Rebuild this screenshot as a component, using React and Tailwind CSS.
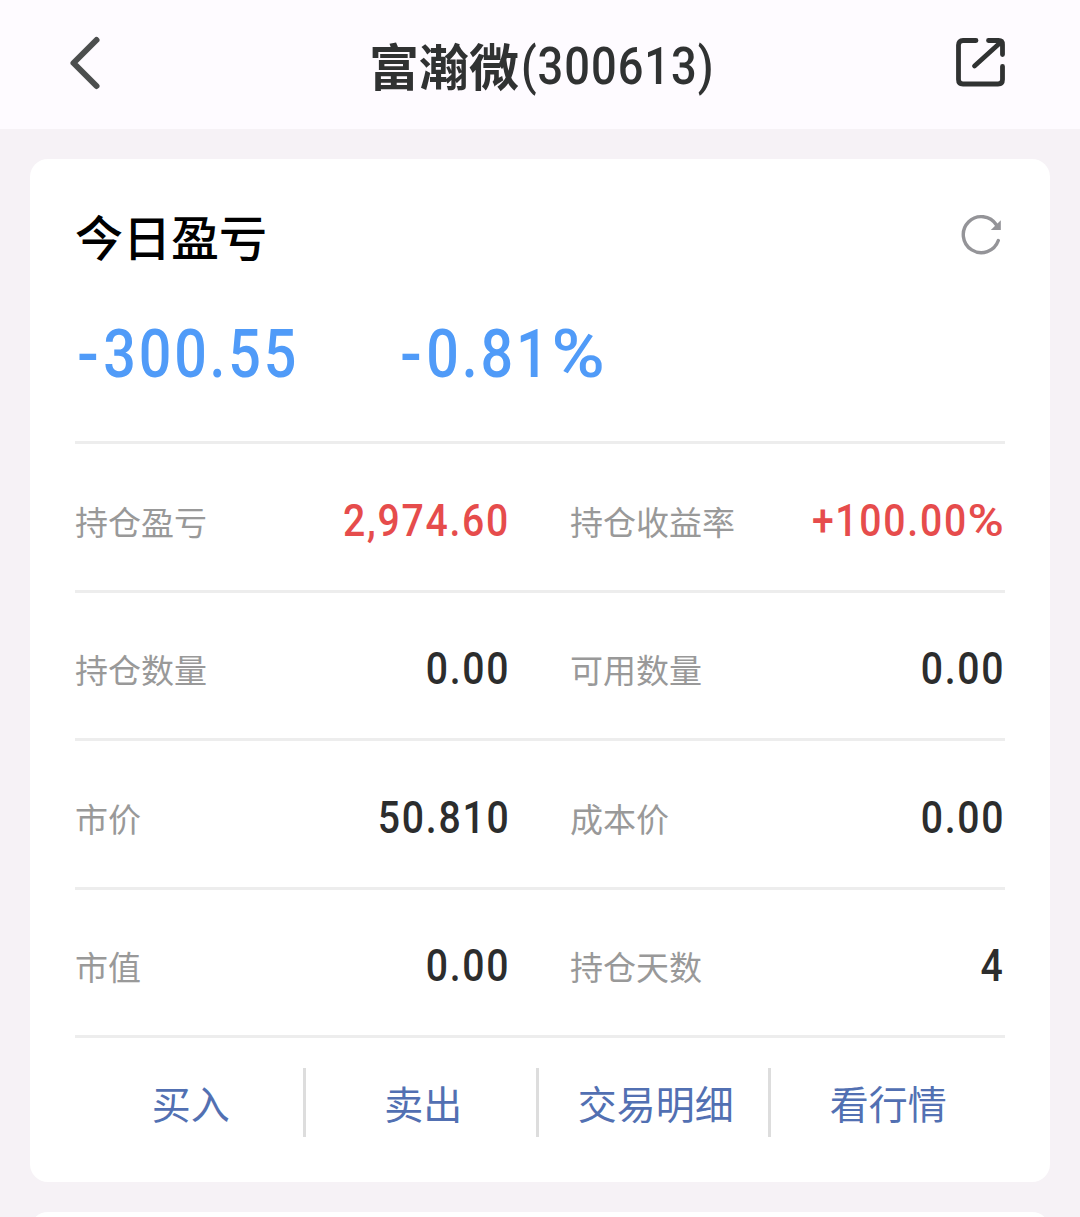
const rows = [
  [
    { label: "持仓盈亏", value: "2,974.60", up: true },
    { label: "持仓收益率", value: "+100.00%", up: true },
  ],
  [
    { label: "持仓数量", value: "0.00" },
    { label: "可用数量", value: "0.00" },
  ],
  [
    { label: "市价", value: "50.810" },
    { label: "成本价", value: "0.00" },
  ],
  [
    { label: "市值", value: "0.00" },
    { label: "持仓天数", value: "4" },
  ],
];

const actions = ["买入", "卖出", "交易明细", "看行情"];

// Condensed figures, with wider signs around them
function Figures({ value }) {
  const sign = value.startsWith("-");
  const percent = value.endsWith("%");
  return (
    <>
      {sign && (
        <span className="mr-[0.07em] inline-block origin-left scale-x-[1.12]">
          -
        </span>
      )}
      {value.replace(/^-|%$/g, "")}
      {percent && (
        <span className="mr-[0.17em] inline-block origin-left scale-x-[1.26]">
          %
        </span>
      )}
    </>
  );
}

function Header() {
  return (
    <header className="flex h-[129px] items-start justify-between bg-[#fefbff] text-[#303232]">
      <button type="button" aria-label="返回" className="ml-[60px] mt-[28px]">
        <svg className="h-[70px] w-[50px]" viewBox="0 0 50 70" fill="none">
          <path
            d="M36.5 12 L13.5 35 L36.5 58"
            stroke="#4c4e4e"
            strokeWidth="6"
            strokeLinecap="round"
            strokeLinejoin="round"
          />
        </svg>
      </button>
      <h1 className="ml-[18px] mt-[29px] flex h-[70px] items-center whitespace-nowrap">
        <span className="font-['Noto_Sans_CJK_SC',sans-serif] text-[50px] font-bold leading-[70px]">
          富瀚微
        </span>
        <span className="w-[190px] pl-[2px] pt-[5px]">
          <span className="inline-block origin-left scale-x-[0.87] font-['Roboto',sans-serif] text-[52px] font-medium leading-[70px] tracking-[1.1px]">
            (300613)
          </span>
        </span>
      </h1>
      <button type="button" aria-label="分享" className="mr-[70px] mt-[32px]">
        <svg
          className="h-[60px] w-[60px]"
          viewBox="0 0 60 60"
          fill="none"
          stroke="#303232"
          strokeWidth="4.8"
          strokeLinecap="round"
          strokeLinejoin="round"
        >
          <path d="M26 8.5 H13 Q8.5 8.5 8.5 13 V47.5 Q8.5 52 13 52 H48 Q52.5 52 52.5 47.5 V34.5" />
          <path d="M38.5 8.5 H48.5 Q52.5 8.5 52.5 12.5 V22.5 M51 10 L24.5 34" />
        </svg>
      </button>
    </header>
  );
}

function RefreshIcon() {
  return (
    <svg
      className="mr-[1px] h-[44px] w-[44px]"
      viewBox="0 0 44 44"
      fill="none"
    >
      <path
        d="M38.3 28.5 A18 18 0 1 1 36.5 13"
        stroke="#949498"
        strokeWidth="3.4"
        strokeLinecap="round"
      />
      <path d="M40.8 8.2 V18 H30.8 Z" fill="#949498" />
    </svg>
  );
}

function Cell({ label, value, up }) {
  return (
    <div className="flex items-center justify-between whitespace-nowrap">
      <span className="font-['Noto_Sans_CJK_SC',sans-serif] text-[33px] leading-[48px] text-[#999999]">
        {label}
      </span>
      <span
        className={`origin-right scale-x-[0.87] font-['Roboto',sans-serif] text-[45px] font-medium leading-[48px] tracking-[2px] ${
          up ? "text-[#e64c4c]" : "text-[#2c2d2d]"
        }`}
      >
        <Figures value={value} />
      </span>
    </div>
  );
}

export default function App() {
  return (
    <div className="h-[1217px] w-[1080px] overflow-hidden bg-[#f6f2f6]">
      <Header />
      <main className="px-[30px] pt-[30px]">
        <section className="h-[1023px] rounded-[18px] bg-white px-[45px]">
          <div className="flex h-[150px] items-center justify-between">
            <h2 className="pt-[2px] font-['Noto_Sans_CJK_SC',sans-serif] text-[48px] font-medium leading-[70px] text-black">
              今日盈亏
            </h2>
            <RefreshIcon />
          </div>
          <div className="flex h-[132px] items-center whitespace-nowrap pb-[40px] pl-[2px] font-['Roboto',sans-serif] text-[66px] font-medium leading-[80px] text-[#509bf8]">
            <div className="w-[323px]">
              <span className="inline-block origin-left scale-x-[0.87] tracking-[3.2px]">
                <Figures value="-300.55" />
              </span>
            </div>
            <span className="inline-block origin-left scale-x-[0.87] tracking-[3.2px]">
              <Figures value="-0.81%" />
            </span>
          </div>
          {rows.map((row) => (
            <div
              key={row[0].label}
              className="grid h-[148.5px] grid-cols-2 gap-[60px] border-t-[3px] border-[#ededed] pt-[8px]"
            >
              {row.map((cell) => (
                <Cell key={cell.label} {...cell} />
              ))}
            </div>
          ))}
          <div className="border-t-[3px] border-[#ededed] pt-[30px]">
            <div className="-ml-[1.5px] mr-[1.5px] grid grid-cols-4">
              {actions.map((action) => (
                <button
                  key={action}
                  type="button"
                  className="h-[69px] border-r-[3px] border-[#dddddd] pl-[5px] font-['Noto_Sans_CJK_SC',sans-serif] text-[39px] leading-[67px] text-[#5270b2] last:border-transparent"
                >
                  {action}
                </button>
              ))}
            </div>
          </div>
        </section>
        <section className="mt-[30px] h-[60px] rounded-[18px] bg-white" />
      </main>
    </div>
  );
}
